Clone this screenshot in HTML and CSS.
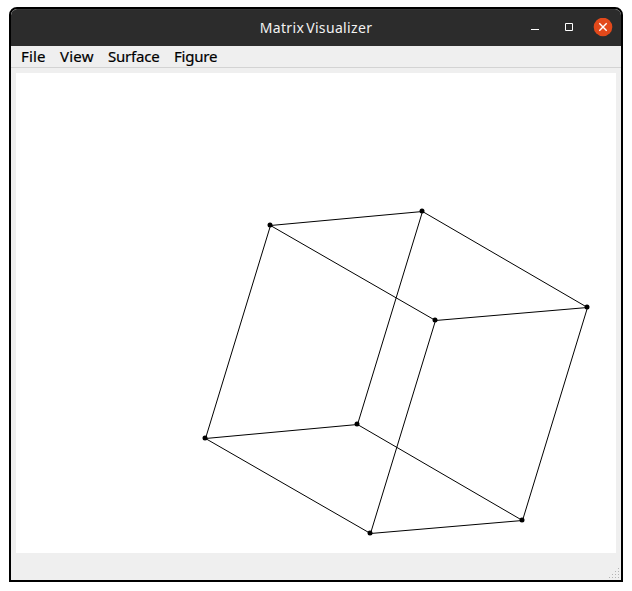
FILE: index.html
```html
<!DOCTYPE html>
<html lang="en">
<head>
<meta charset="utf-8">
<title>Matrix Visualizer</title>
<link rel="stylesheet" href="styles.css">
</head>
<body>
<main class="window">
  <header class="titlebar">
    <h1 class="title">Matrix Visualizer</h1>
    <div class="controls">
      <svg class="control" width="20" height="20" viewBox="0 0 20 20"><path class="glyph-fill" d="M6 11h8v1H6z"/></svg>
      <svg class="control" width="20" height="20" viewBox="0 0 20 20"><path class="glyph" d="M6.5 5.5h7v7h-7z"/></svg>
      <svg class="control" width="20" height="20" viewBox="0 0 20 20"><circle class="close-disc" cx="10" cy="9" r="9.3"/><path class="glyph close-cross" d="M6.3 5.3l7.4 7.4M13.7 5.3l-7.4 7.4"/></svg>
    </div>
  </header>
  <nav class="menubar">
    <span class="menu file">File</span>
    <span class="menu view">View</span>
    <span class="menu surface">Surface</span>
    <span class="menu figure">Figure</span>
  </nav>
  <section class="content">
    <svg class="canvas" width="600" height="480" viewBox="16 73 600 480">
      <g class="edges">
        <path d="M270.5 225.5L422.5 211.5L587.5 307.5L435.5 320.5Z"/>
        <path d="M205.5 438.5L357.5 424.5L522.5 520.5L370.5 533.5Z"/>
        <path d="M270.5 225.5L205.5 438.5M422.5 211.5L357.5 424.5M587.5 307.5L522.5 520.5M435.5 320.5L370.5 533.5"/>
      </g>
      <g class="vertices">
        <circle cx="270" cy="225" r="2.5"/><circle cx="422" cy="211" r="2.5"/>
        <circle cx="587" cy="307" r="2.5"/><circle cx="435" cy="320" r="2.5"/>
        <circle cx="205" cy="438" r="2.5"/><circle cx="357" cy="424" r="2.5"/>
        <circle cx="522" cy="520" r="2.5"/><circle cx="370" cy="533" r="2.5"/>
      </g>
    </svg>
  </section>
  <footer class="statusbar">
    <svg class="grip" width="11" height="11" viewBox="0 0 11 11"><path d="M9 0h1v1h-1zM6 3h1v1h-1zM9 3h1v1h-1zM3 6h1v1h-1zM6 6h1v1h-1zM9 6h1v1h-1zM0 9h1v1h-1zM3 9h1v1h-1zM6 9h1v1h-1zM9 9h1v1h-1z"/></svg>
  </footer>
</main>
</body>
</html>
```

FILE: styles.css
```css
* { box-sizing: border-box; }
body {
  margin: 0;
  padding: 7px 9px 9px;
  background: #fff;
  font-family: "Noto Sans", "Open Sans", sans-serif;
}
.window {
  width: 614px;
  height: 575px;
  display: flex;
  flex-direction: column;
  border: 2px solid #000;
  border-radius: 8px 8px 0 0;
  background: #efefef;
  overflow: hidden;
}
.titlebar {
  height: 37px;
  display: grid;
  grid-template-columns: 1fr auto 1fr;
  align-items: center;
  flex: none;
  background: #2c2c2c;
  border-top: 1px solid #383838;
  border-radius: 6px 6px 0 0;
}
.title {
  grid-column: 2;
  margin: 0;
  color: #f2f2f2;
  font-size: 14px;
  font-weight: 400;
  letter-spacing: 0.35px;
  word-spacing: -2px;
  line-height: 20px;
  white-space: nowrap;
}
.controls {
  display: flex;
  justify-content: flex-end;
  gap: 14px;
  padding-right: 8px;
}
.control { display: block; }
.glyph { fill: none; stroke: #fff; stroke-width: 1; }
.glyph-fill { fill: #fff; }
.close-disc { fill: #e2491b; }
.close-cross { stroke-width: 1.4; }
.menubar {
  height: 22px;
  display: flex;
  flex: none;
  padding-left: 10px;
  border-bottom: 1px solid #d3d3d3;
  color: #000;
  font-size: 15px;
  line-height: 21px;
  -webkit-text-stroke: 0.2px #000;
}
.menu { flex: none; white-space: nowrap; }
.file { width: 39px; letter-spacing: 0.15px; }
.view { width: 48px; letter-spacing: 0.2px; }
.surface { width: 66px; letter-spacing: -0.2px; }
.figure { letter-spacing: -0.2px; }
.content { flex: none; padding: 5px 5px 0; }
.canvas { display: block; background: #fff; }
.edges { fill: none; stroke: #000; stroke-width: 1; }
.statusbar {
  flex: 1;
  display: flex;
  justify-content: flex-end;
  align-items: flex-end;
  padding: 0 1px 1px 0;
}
.grip { display: block; fill: #b4b4b4; }
```
